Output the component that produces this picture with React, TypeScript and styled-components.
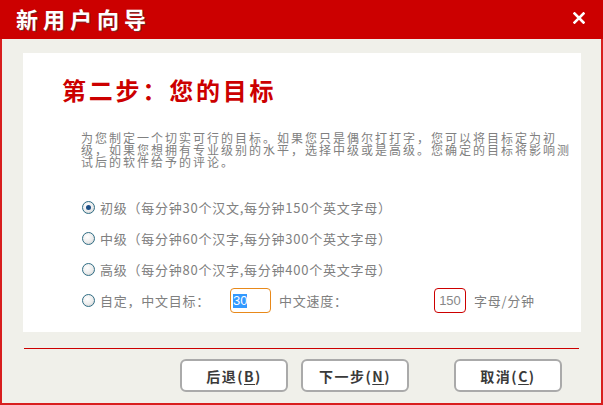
import { styled, createGlobalStyle } from 'styled-components';

const GlobalStyle = createGlobalStyle`
  html, body {
    margin: 0;
    padding: 0;
    background: #ffffff;
  }
  body {
    font-family: "Noto Sans CJK SC", "Liberation Sans", sans-serif;
    overflow: hidden;
  }
`;

const Window = styled.div`
  width: 603px;
  height: 405px;
  display: flex;
  flex-direction: column;
  box-sizing: border-box;
`;

const TitleBar = styled.div`
  height: 39px;
  flex: none;
  box-sizing: border-box;
  padding: 0 18px 4px 16px;
  background: #cc0000;
  display: flex;
  align-items: center;
  justify-content: space-between;
`;

const Title = styled.h1`
  margin: 0;
  font-size: 22px;
  line-height: 22px;
  font-weight: 700;
  letter-spacing: 5px;
  color: #ffffff;
  text-shadow: 1px 1px 0 #7a2a2a;
`;

const CloseButton = styled.button`
  border: 0;
  padding: 0;
  background: transparent;
  width: 12px;
  height: 12px;
  display: flex;
  cursor: pointer;
`;

const Body = styled.div`
  flex: 1;
  display: flex;
  flex-direction: column;
  background: #f0f0ea;
  border: 2px solid #d81e1e;
  border-top: 0;
`;

const Panel = styled.div`
  height: 279px;
  margin: 14px 20px 0 21px;
  padding: 25px 0 0 39px;
  box-sizing: border-box;
  background: #ffffff;
  display: flex;
  flex-direction: column;
`;

const Heading = styled.h2`
  margin: 0;
  font-size: 24px;
  line-height: 24px;
  font-weight: 700;
  letter-spacing: 2.8px;
  color: #cc0000;
`;

const Intro = styled.p`
  margin: 30px 0 0 19px;
  width: 492px;
  font-size: 12px;
  line-height: 12px;
  letter-spacing: 2px;
  color: #808080;
`;

const Options = styled.div`
  margin: 24px 0 0 20px;
  display: flex;
  flex-direction: column;
`;

const OptionRow = styled.div`
  height: 31px;
  display: flex;
  align-items: center;
  font-size: 13px;
  letter-spacing: 0.75px;
  color: #808080;
`;

const Radio = styled.span<{ $checked?: boolean }>`
  position: relative;
  flex: none;
  width: 13px;
  height: 13px;
  box-sizing: border-box;
  border-radius: 50%;
  border: 1px solid #2f6d84;
  background: radial-gradient(circle at 40% 35%, #ffffff 0%, #ececec 55%, #c4c4c4 100%);
  margin-right: 5px;

  &::after {
    content: '';
    display: ${(p) => (p.$checked ? 'block' : 'none')};
    position: absolute;
    top: 3px;
    left: 3px;
    width: 5px;
    height: 5px;
    border-radius: 50%;
    background: #1d4f86;
  }
`;

const Label = styled.span<{ $width?: number; $gap?: number }>`
  flex: none;
  width: ${(p) => (p.$width ? `${p.$width}px` : 'auto')};
  margin-left: ${(p) => p.$gap ?? 0}px;
  white-space: nowrap;
`;

const Field = styled.div<{ $width: number; $border: string; $center?: boolean }>`
  flex: none;
  width: ${(p) => p.$width}px;
  height: 25px;
  box-sizing: border-box;
  border: 1px solid ${(p) => p.$border};
  border-radius: 4px;
  background: #ffffff;
  display: flex;
  align-items: center;
  justify-content: ${(p) => (p.$center ? 'center' : 'flex-start')};
  padding-left: ${(p) => (p.$center ? 0 : 2)}px;
  font-family: "Liberation Sans", sans-serif;
  font-size: 13px;
  letter-spacing: 0;
  color: #888888;
`;

const Selected = styled.span`
  background: #3399ff;
  color: #ffffff;
  line-height: 14px;
`;

const Separator = styled.div`
  height: 1px;
  margin: 16px 22px 0;
  background: #cc0000;
`;

const Footer = styled.div`
  margin-top: 10px;
  padding-right: 39px;
  display: flex;
  justify-content: flex-end;
  gap: 13px;
`;

const Button = styled.button<{ $spaced?: boolean }>`
  width: 108px;
  height: 33px;
  margin-left: ${(p) => (p.$spaced ? 32 : 0)}px;
  box-sizing: border-box;
  border: 2px solid #aaaaaa;
  border-radius: 6px;
  background: #ffffff;
  font-family: "Noto Sans CJK SC", sans-serif;
  font-size: 14px;
  font-weight: 600;
  letter-spacing: 1.5px;
  color: #3a3a3a;
  display: flex;
  align-items: center;
  justify-content: center;
  padding: 0;
  cursor: pointer;

  u {
    text-underline-offset: 2px;
  }
`;

const CloseIcon = () => (
  <svg width="12" height="12" viewBox="0 0 12 12">
    <path d="M1.5 1.5 L10.5 10.5 M10.5 1.5 L1.5 10.5" stroke="#ffffff" strokeWidth="2.6" strokeLinecap="square" />
  </svg>
);

const levels = [
  { name: '初级', text: '（每分钟30个汉文,每分钟150个英文字母）', checked: true },
  { name: '中级', text: '（每分钟60个汉字,每分钟300个英文字母）' },
  { name: '高级', text: '（每分钟80个汉字,每分钟400个英文字母）' },
];

export default function App() {
  return (
    <>
      <GlobalStyle />
      <Window>
        <TitleBar>
          <Title>新用户向导</Title>
          <CloseButton aria-label="关闭">
            <CloseIcon />
          </CloseButton>
        </TitleBar>
        <Body>
          <Panel>
            <Heading>第二步：您的目标</Heading>
            <Intro>
              为您制定一个切实可行的目标。如果您只是偶尔打打字，您可以将目标定为初级，如果您想拥有专业级别的水平，选择中级或是高级。您确定的目标将影响测试后的软件给予的评论。
            </Intro>
            <Options>
              {levels.map((l) => (
                <OptionRow key={l.name}>
                  <Radio $checked={l.checked} />
                  <Label>
                    {l.name}
                    {l.text}
                  </Label>
                </OptionRow>
              ))}
              <OptionRow>
                <Radio />
                <Label $width={130}>自定，中文目标：</Label>
                <Field $width={41} $border="#e8891a">
                  <Selected>30</Selected>
                </Field>
                <Label $width={155} $gap={8}>
                  中文速度：
                </Label>
                <Field $width={32} $border="#cc0000" $center>
                  150
                </Field>
                <Label $gap={8}>字母/分钟</Label>
              </OptionRow>
            </Options>
          </Panel>
          <Separator />
          <Footer>
            <Button>
              后退(<u>B</u>)
            </Button>
            <Button>
              下一步(<u>N</u>)
            </Button>
            <Button $spaced>
              取消(<u>C</u>)
            </Button>
          </Footer>
        </Body>
      </Window>
    </>
  );
}
